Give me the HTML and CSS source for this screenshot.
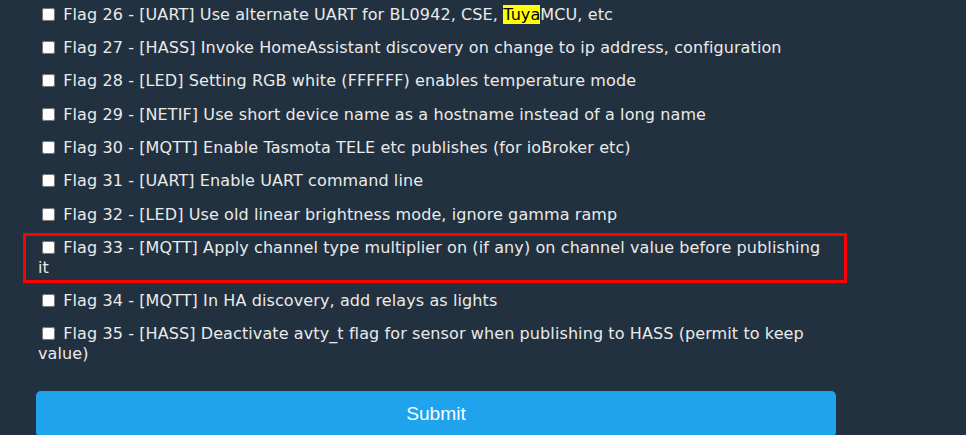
FILE: index.html
```html
<!DOCTYPE html>
<html>
<head>
<meta charset="utf-8">
<title>Flags</title>
<link rel="stylesheet" href="styles.css">
</head>
<body>
<div class="page">
  <form class="flags" action="#" method="get">
    <div class="flag"><input type="checkbox" id="flag26"> <label for="flag26">Flag 26 - [UART] Use alternate UART for BL0942, CSE, <mark>Tuya</mark>MCU, etc</label></div>
    <div class="flag"><input type="checkbox" id="flag27"> <label for="flag27">Flag 27 - [HASS] Invoke HomeAssistant discovery on change to ip address, configuration</label></div>
    <div class="flag"><input type="checkbox" id="flag28"> <label for="flag28">Flag 28 - [LED] Setting RGB white (FFFFFF) enables temperature mode</label></div>
    <div class="flag"><input type="checkbox" id="flag29"> <label for="flag29">Flag 29 - [NETIF] Use short device name as a hostname instead of a long name</label></div>
    <div class="flag"><input type="checkbox" id="flag30"> <label for="flag30">Flag 30 - [MQTT] Enable Tasmota TELE etc publishes (for ioBroker etc)</label></div>
    <div class="flag"><input type="checkbox" id="flag31"> <label for="flag31">Flag 31 - [UART] Enable UART command line</label></div>
    <div class="flag"><input type="checkbox" id="flag32"> <label for="flag32">Flag 32 - [LED] Use old linear brightness mode, ignore gamma ramp</label></div>
    <div class="flag marked"><input type="checkbox" id="flag33"> <label for="flag33">Flag 33 - [MQTT] Apply channel type multiplier on (if any) on channel value before publishing it</label></div>
    <div class="flag"><input type="checkbox" id="flag34"> <label for="flag34">Flag 34 - [MQTT] In HA discovery, add relays as lights</label></div>
    <div class="flag"><input type="checkbox" id="flag35"> <label for="flag35">Flag 35 - [HASS] Deactivate avty_t flag for sensor when publishing to HASS (permit to keep value)</label></div>
    <button type="submit" class="submit">Submit</button>
  </form>
</div>
</body>
</html>
```

FILE: styles.css
```css
html, body
{
margin: 0;
padding: 0;
background: #22313f;
}

.page
{
padding-left: 36px;
}

.flags
{
width: 800px;
margin: -2px 0 0 0;
color: #eaeaea;
font-family: "DejaVu Sans", Verdana, sans-serif;
font-size: 16px;
letter-spacing: 0.1px;
}

.flag
{
position: relative;
line-height: 20px;
padding: 6.67px 5px 6.67px 2px;
}

.flag input
{
margin: 0 3px 0 4px;
vertical-align: -1px;
}

.flag mark
{
background: #ffff00;
color: #000000;
}

.marked:after
{
content: "";
position: absolute;
left: -13px;
right: -11px;
top: 2px;
bottom: 2px;
border: 3px solid #ff0000;
}

.submit
{
display: block;
width: 100%;
margin-top: 20px;
border: 0;
border-radius: 0.3rem;
background: #1fa3ec;
color: #faffff;
font-family: "Liberation Sans", Arial, sans-serif;
font-size: 1.2rem;
letter-spacing: 0;
line-height: 46px;
padding: 0;
}
```
